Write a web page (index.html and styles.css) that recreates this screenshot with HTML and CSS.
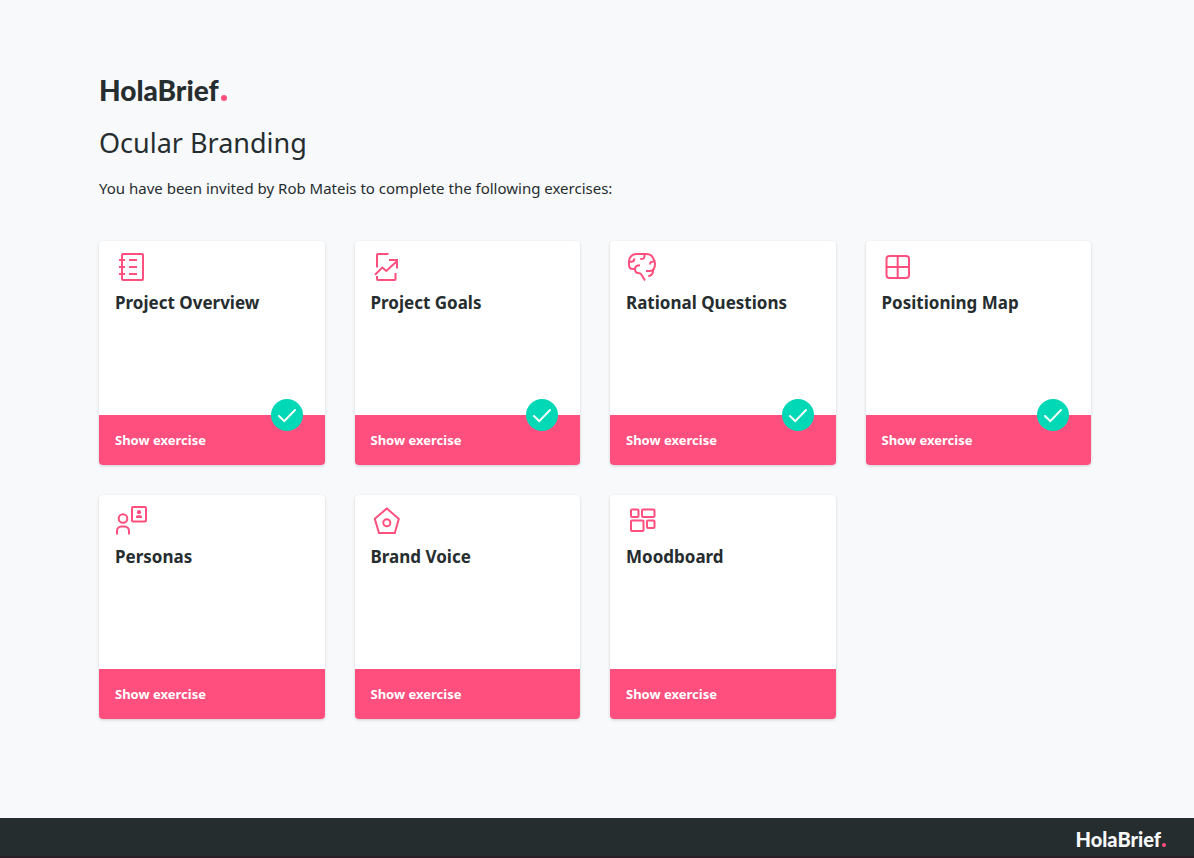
FILE: index.html
```html
<!DOCTYPE html>
<html lang="en">
<head>
    <meta charset="UTF-8">
    <meta name="viewport" content="width=device-width, initial-scale=1.0">
    <title>Ocular Branding - HolaBrief</title>
    <link rel="stylesheet" href="styles.css">
</head>
<body>
    <main class="page">
        <header class="intro">
            <div class="logo">HolaBrief<span class="dot"></span></div>
            <h1>Ocular Branding</h1>
            <p>You have been invited by Rob Mateis to complete the following exercises:</p>
        </header>

        <section class="cards">
            <article class="card">
                <div class="card-body">
                    <svg class="icon" viewBox="0 0 32 32" aria-hidden="true">
                        <rect x="7" y="3" width="21" height="26" rx="1"/>
                        <path d="M4 9h6M4 16h6M4 23h6M14 9h8M14 16h8M14 23h8"/>
                    </svg>
                    <h2>Project Overview</h2>
                </div>
                <a class="show" href="#overview">Show exercise</a>
                <span class="check"><svg viewBox="0 0 32 32" aria-hidden="true"><path d="M8 17l5.300 5.200L24 11"/></svg></span>
            </article>

            <article class="card">
                <div class="card-body">
                    <svg class="icon" viewBox="0 0 32 32" aria-hidden="true">
                        <path d="M6 16.500V4a1 1 0 0 1 1-1h10.500"/>
                        <path d="M4 23.700l7.300-7.200 4 3.500L25.500 10.500"/>
                        <path d="M18 9h8v8.500"/>
                        <path d="M6 25v3a1 1 0 0 0 1 1h16.500a1 1 0 0 0 1-1v-6"/>
                    </svg>
                    <h2>Project Goals</h2>
                </div>
                <a class="show" href="#goals">Show exercise</a>
                <span class="check"><svg viewBox="0 0 32 32" aria-hidden="true"><path d="M8 17l5.300 5.200L24 11"/></svg></span>
            </article>

            <article class="card">
                <div class="card-body">
                    <svg class="icon" viewBox="0 0 32 32" aria-hidden="true">
                        <path d="M9 18H7c-2.500 0-4-2-4-4.500v-3C3 6 6.500 3 10.500 3H20c4 0 6.500 2 7.500 5 1 1 1.500 2.500 1.500 4.500 0 4-1.500 7.500-5 7.500h-4"/>
                        <path d="M27 18.500c.5 3-1 6.500-4.700 6.500"/>
                        <path d="M14 14.300c-3 0-5 1.500-5 4 0 2.700 2 4 4.500 4 1 0 1.500.7 2 1.500l3.500 5.700"/>
                        <path d="M3 10.800h2.500c2 0 2.800-1 2.800-3.300M18.500 3v2.500c0 1.500-1 2.500-4.300 2.500M28.500 10.500c-3 0-4.500 0-4.500 3"/>
                    </svg>
                    <h2>Rational Questions</h2>
                </div>
                <a class="show" href="#questions">Show exercise</a>
                <span class="check"><svg viewBox="0 0 32 32" aria-hidden="true"><path d="M8 17l5.300 5.200L24 11"/></svg></span>
            </article>

            <article class="card">
                <div class="card-body">
                    <svg class="icon" viewBox="0 0 32 32" aria-hidden="true">
                        <rect x="4.500" y="5" width="22.500" height="22" rx="3"/>
                        <path d="M15.700 5v22M5 16h22"/>
                    </svg>
                    <h2>Positioning Map</h2>
                </div>
                <a class="show" href="#map">Show exercise</a>
                <span class="check"><svg viewBox="0 0 32 32" aria-hidden="true"><path d="M8 17l5.300 5.200L24 11"/></svg></span>
            </article>

            <article class="card">
                <div class="card-body">
                    <svg class="icon" viewBox="0 0 32 32" aria-hidden="true">
                        <circle cx="8" cy="13.500" r="4.300"/>
                        <path d="M2 29.500V26c0-2.500 2-4.500 4.500-4.500h3c2.500 0 4.500 2 4.500 4.500v3.500"/>
                        <rect x="17" y="2" width="14" height="14.500" rx="1"/>
                        <circle class="solid" cx="24" cy="7.200" r="2.100"/>
                        <path class="solid" d="M21 13v-1c0-1 .8-1.800 1.800-1.800h2.400c1 0 1.800.8 1.800 1.800v1z"/>
                    </svg>
                    <h2>Personas</h2>
                </div>
                <a class="show" href="#personas">Show exercise</a>
            </article>

            <article class="card">
                <div class="card-body">
                    <svg class="icon" viewBox="0 0 32 32" aria-hidden="true">
                        <path d="M15.800 3.500l12 10.300L23.800 28H8L3.800 13.800z"/>
                        <circle cx="15.800" cy="17.700" r="3.500"/>
                    </svg>
                    <h2>Brand Voice</h2>
                </div>
                <a class="show" href="#voice">Show exercise</a>
            </article>

            <article class="card">
                <div class="card-body">
                    <svg class="icon" viewBox="0 0 32 32" aria-hidden="true">
                        <rect x="5" y="4.500" width="7.500" height="7.500" rx="1"/>
                        <rect x="16" y="4.500" width="12.500" height="7.500" rx="1"/>
                        <rect x="5" y="15.500" width="12.500" height="10.500" rx="1"/>
                        <rect x="21" y="15.500" width="7.500" height="7.500" rx="1"/>
                    </svg>
                    <h2>Moodboard</h2>
                </div>
                <a class="show" href="#moodboard">Show exercise</a>
            </article>
        </section>
    </main>

    <footer class="footer">
        <div class="logo logo-small">HolaBrief<span class="dot"></span></div>
    </footer>
</body>
</html>
```
FILE: styles.css
```css
* {
    box-sizing: border-box;
}
body {
    font-family: "Noto Sans", sans-serif;
    margin: 0;
    min-height: 100vh;
    display: flex;
    flex-direction: column;
    background: #f8f9fb;
    color: #262d2f;
}
.page {
    flex: 1;
    padding: 72px 103px 40px 99px;
}
.logo {
    font-family: Lato, sans-serif;
    font-size: 28px;
    font-weight: 900;
    line-height: 36px;
}
.dot {
    display: inline-block;
    width: 6px;
    height: 6px;
    margin-left: 2px;
    border-radius: 50%;
    background: #ff4f7e;
}
h1 {
    margin: 17px 0 0;
    font-size: 27px;
    font-weight: 400;
    line-height: 36px;
}
p {
    margin: 15px 0 0;
    font-size: 15px;
    line-height: 24px;
}
.cards {
    display: grid;
    grid-template-columns: repeat(4, 1fr);
    gap: 30px;
    margin-top: 41px;
}
.card {
    position: relative;
    display: flex;
    flex-direction: column;
    min-height: 224px;
    background: #fff;
    border-radius: 4px;
    box-shadow: 0 1px 3px rgba(38, 45, 47, 0.2);
}
.card-body {
    flex: 1;
    padding: 10px 16px;
}
.icon {
    display: block;
    width: 32px;
    height: 32px;
    fill: none;
    stroke: #ff4f7e;
    stroke-width: 2;
}
.icon .solid {
    fill: #ff4f7e;
    stroke: none;
}
h2 {
    margin: 8px 0 0;
    font-size: 17px;
    font-weight: 700;
    line-height: 24px;
}
.show {
    padding: 0 16px;
    background: #ff4f7e;
    border-radius: 0 0 4px 4px;
    color: #fff;
    font-size: 13px;
    font-weight: 700;
    line-height: 50px;
    text-decoration: none;
}
.check {
    position: absolute;
    right: 22px;
    bottom: 34px;
    width: 32px;
    height: 32px;
    border-radius: 50%;
    background: #00d8b6;
}
.check svg {
    display: block;
    fill: none;
    stroke: #fff;
    stroke-width: 2;
    stroke-linecap: round;
}
.footer {
    display: flex;
    justify-content: flex-end;
    height: 40px;
    padding: 9px 28px 0;
    background: #262d2f;
    border-bottom: 2px solid #291f26;
    color: #f8f9fb;
}
.logo-small {
    font-size: 20px;
    line-height: 24px;
}
.logo-small .dot {
    width: 4px;
    height: 4px;
    margin-left: 1px;
}
```
